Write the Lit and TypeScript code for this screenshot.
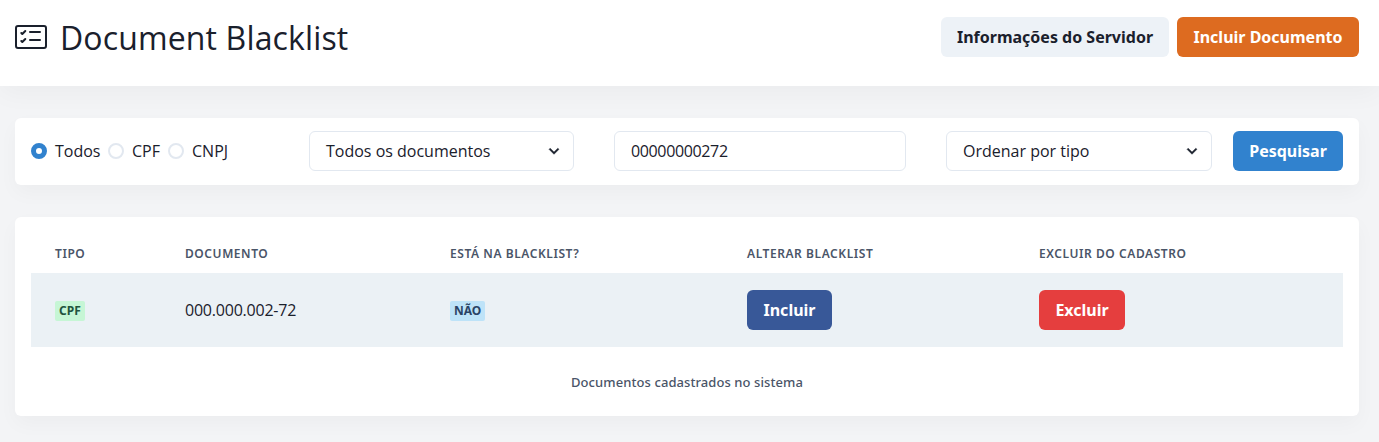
import { LitElement, html, css } from "lit";
import { customElement } from "lit/decorators.js";

@customElement("app-root")
export class AppRoot extends LitElement {
  static styles = css`
    :host {
      display: block;
      box-sizing: border-box;
      height: 442px;
      overflow: hidden;
      background: #f3f4f6;
      color: #1a202c;
      font: 400 16px/24px "Noto Sans", "Open Sans", sans-serif;
    }
    *, *::before, *::after { box-sizing: border-box; }
    .header {
      display: flex;
      justify-content: space-between;
      align-items: flex-start;
      height: 86px;
      padding: 16px 20px 0 15px;
      background: #fff;
      box-shadow: 0 8px 24px rgba(0, 0, 0, 0.035);
    }
    .brand { display: flex; align-items: center; gap: 13px; height: 42px; }
    .brand svg { display: block; }
    .title {
      margin: 0;
      padding-top: 1px;
      font: 400 32px/42px "Open Sans", sans-serif;
      letter-spacing: 0.14px;
      white-space: nowrap;
    }
    .actions { display: flex; gap: 8px; padding-top: 1px; }
    .btn {
      display: inline-flex;
      align-items: center;
      justify-content: center;
      height: 40px;
      padding: 0;
      border: 0;
      border-radius: 6px;
      color: #fff;
      font: 700 16px/20px "Noto Sans", sans-serif;
      white-space: nowrap;
    }
    .info { width: 228px; background: #edf2f7; color: #1a202c; }
    .add { width: 182px; background: #dd6b20; }
    .search { width: 110px; background: #3182ce; }
    .include { width: 85px; background: #385898; }
    .remove { width: 86px; background: #e53e3e; }
    .main { display: flex; flex-direction: column; gap: 32px; padding: 32px 20px 0 15px; }
    .card {
      background: #fff;
      border-radius: 6px;
      box-shadow: 0 8px 20px rgba(0, 0, 0, 0.03);
    }
    .filters {
      display: grid;
      grid-template-columns: 278px 265px 40px 292px 40px 266px 21px 110px;
      align-items: center;
      height: 67px;
      padding: 0 16px 1px;
    }
    .radios { display: flex; }
    .radio { display: flex; align-items: center; gap: 8px; white-space: nowrap; }
    .r1 { width: 77px; }
    .r2 { width: 60px; }
    .dot { flex: none; width: 16px; height: 16px; border: 2px solid #e2e8f0; border-radius: 50%; }
    .dot.on { border: 5px solid #3182ce; }
    .field {
      display: flex;
      align-items: center;
      justify-content: space-between;
      height: 40px;
      padding: 0 9px 0 16px;
      border: 1px solid #e2e8f0;
      border-radius: 6px;
      white-space: nowrap;
    }
    .c2 { grid-column: 2; }
    .c4 { grid-column: 4; letter-spacing: -0.36px; }
    .c6 { grid-column: 6; }
    .c8 { grid-column: 8; }
    .light { font-family: "Open Sans", sans-serif; }
    .doc { letter-spacing: -0.22px; }
    .panel { height: 199px; padding: 16px; }
    .row {
      display: grid;
      grid-template-columns: 130px 265px 297px 292px 1fr;
      align-items: center;
      justify-items: start;
      padding-left: 24px;
    }
    .head {
      height: 40px;
      padding-top: 1px;
      color: #4a5568;
      font: 600 12px/16px "Noto Sans", sans-serif;
      letter-spacing: 0.57px;
      text-transform: uppercase;
    }
    .data { height: 74px; background: #ebf1f5; }
    .badge {
      height: 20px;
      margin-top: 2px;
      padding: 0 4px;
      border-radius: 2px;
      font: 700 12px/20px "Noto Sans", sans-serif;
    }
    .green { background: #c6f6d5; color: #22543d; }
    .blue { background: #bee3f8; color: #2a4365; }
    .caption {
      padding-top: 25px;
      color: #4a5568;
      font: 500 13px/20px "Noto Sans", sans-serif;
      letter-spacing: 0.08px;
      text-align: center;
    }
  `;

  private chevron() {
    return html`<svg width="20" height="20" viewBox="0 0 24 24" fill="currentColor" stroke="currentColor" stroke-width="0.5" aria-hidden="true">
      <path d="M16.59 8.59L12 13.17 7.41 8.59 6 10l6 6 6-6z"></path>
    </svg>`;
  }

  render() {
    return html`
      <header class="header">
        <div class="brand">
          <svg width="32" height="32" viewBox="0 0 16 16" fill="currentColor" aria-hidden="true">
            <path d="M14.5 3a.5.5 0 0 1 .5.5v9a.5.5 0 0 1-.5.5h-13a.5.5 0 0 1-.5-.5v-9a.5.5 0 0 1 .5-.5h13zm-13-1A1.5 1.5 0 0 0 0 3.5v9A1.5 1.5 0 0 0 1.5 14h13a1.5 1.5 0 0 0 1.5-1.5v-9A1.5 1.5 0 0 0 14.5 2h-13z"></path>
            <path d="M7 5.5a.5.5 0 0 1 .5-.5h5a.5.5 0 0 1 0 1h-5a.5.5 0 0 1-.5-.5zm-1.496-.854a.5.5 0 0 1 0 .708l-1.5 1.5a.5.5 0 0 1-.708 0l-.5-.5a.5.5 0 1 1 .708-.708l.146.147 1.146-1.147a.5.5 0 0 1 .708 0zM7 9.5a.5.5 0 0 1 .5-.5h5a.5.5 0 0 1 0 1h-5a.5.5 0 0 1-.5-.5zm-1.496-.854a.5.5 0 0 1 0 .708l-1.5 1.5a.5.5 0 0 1-.708 0l-.5-.5a.5.5 0 0 1 .708-.708l.146.147 1.146-1.147a.5.5 0 0 1 .708 0z"></path>
          </svg>
          <h1 class="title">Document Blacklist</h1>
        </div>
        <div class="actions">
          <button class="btn info">Informações do Servidor</button>
          <button class="btn add">Incluir Documento</button>
        </div>
      </header>
      <main class="main">
        <section class="card filters">
          <div class="radios light">
            <label class="radio r1"><span class="dot on"></span>Todos</label>
            <label class="radio r2"><span class="dot"></span>CPF</label>
            <label class="radio"><span class="dot"></span>CNPJ</label>
          </div>
          <div class="field c2 light"><span>Todos os documentos</span>${this.chevron()}</div>
          <div class="field c4 light"><span>00000000272</span></div>
          <div class="field c6 light"><span>Ordenar por tipo</span>${this.chevron()}</div>
          <button class="btn search c8">Pesquisar</button>
        </section>
        <section class="card panel">
          <div class="row head">
            <span>Tipo</span><span>Documento</span><span>Está na blacklist?</span>
            <span>Alterar blacklist</span><span>Excluir do cadastro</span>
          </div>
          <div class="row data">
            <span class="badge green">CPF</span>
            <span class="light doc">000.000.002-72</span>
            <span class="badge blue">NÃO</span>
            <button class="btn include">Incluir</button>
            <button class="btn remove">Excluir</button>
          </div>
          <div class="caption">Documentos cadastrados no sistema</div>
        </section>
      </main>
    `;
  }
}
